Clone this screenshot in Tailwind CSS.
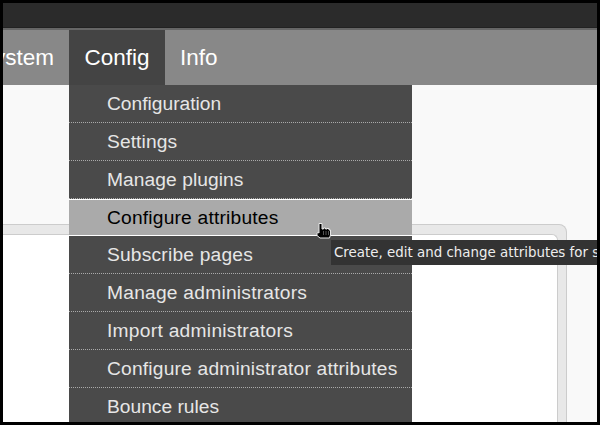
<!DOCTYPE html>
<html lang="en">
<head>
    <meta charset="UTF-8">
    <title>Config menu</title>
    <script src="https://cdn.jsdelivr.net/npm/@tailwindcss/browser@4"></script>
</head>
<body class="w-[600px] h-[425px] overflow-hidden bg-black font-['Liberation_Sans',sans-serif]">
    <div class="relative w-[600px] h-[425px] border-[3px] border-black overflow-hidden bg-[#f9f9f9]">

        <!-- Top bar -->
        <div class="h-[25px] bg-[#2b2b2b] border-b border-[#222]"></div>
        <div class="h-[2px] bg-[#666]"></div>

        <!-- Nav -->
        <nav class="h-[55px] flex bg-[#888] text-white text-[22.5px]">
            <div class="w-[66px] flex items-center justify-end pr-[15px] overflow-hidden whitespace-nowrap">System</div>
            <div class="w-[96px] flex items-center pl-[15.500px] bg-[#444]">Config</div>
            <div class="flex items-center pl-[15px]">Info</div>
        </nav>

        <!-- Page panel -->
        <div class="mt-[139px] w-[564px] h-[200px] bg-[#e8e8e8] border border-[#ccc] rounded-tr-[8px] border-l-0 pt-[9px] pr-[8px]">
            <div class="h-full bg-white border-t border-r border-[#ccc] rounded-tr-[6px]"></div>
        </div>

        <!-- Dropdown -->
        <ul class="absolute left-[66px] top-[82px] w-[343px] bg-[#4a4a4a] text-[#e6e6e6] text-[19.2px]">
            <li class="h-[38px] pl-[38px] pt-px flex items-center border-b border-dotted border-[#aaa]">Configuration</li>
            <li class="h-[38px] pl-[38px] pt-px flex items-center border-b border-dotted border-[#aaa] tracking-[0.1px]">Settings</li>
            <li class="h-[38px] pl-[38px] pt-px flex items-center border-b border-dotted border-[#aaa] tracking-[0.07px]">Manage plugins</li>
            <li class="h-[37px] pl-[38px] pt-px flex items-center bg-[#aaa] text-black border-t border-b border-t-white border-b-white border-b-dotted tracking-[0.2px]">Configure attributes</li>
            <li class="h-[38px] pl-[38px] pt-px flex items-center border-b border-dotted border-[#aaa] tracking-[0.2px]">Subscribe pages</li>
            <li class="h-[38px] pl-[38px] pt-px flex items-center border-b border-dotted border-[#aaa] tracking-[0.24px]">Manage administrators</li>
            <li class="h-[38px] pl-[38px] pt-px flex items-center border-b border-dotted border-[#aaa] tracking-[0.28px]">Import administrators</li>
            <li class="h-[38px] pl-[38px] pt-px flex items-center border-b border-dotted border-[#aaa] tracking-[0.2px]">Configure administrator attributes</li>
            <li class="h-[38px] pl-[38px] flex items-center">Bounce rules</li>
        </ul>

        <!-- Tooltip -->
        <div class="absolute left-[328px] top-[237px] w-[266px] h-[25px] pl-[3px] bg-[#333] text-[#eee] text-[13.4px] leading-[26px] whitespace-nowrap overflow-hidden font-['DejaVu_Sans',sans-serif]">Create, edit and change attributes for subscribers</div>

        <!-- Hand cursor -->
        <svg class="absolute left-[313px] top-[219px]" width="17" height="18" viewBox="0 0 17 18">
            <path d="M3 1.500h3v5.500h1.500V6h2v1h1.500V6.500h2V8h1.500v5l-1 3H4l-3-2.500V11l1-.5L3 11z" fill="#000" stroke="#e8e8e8" stroke-width="1" stroke-linejoin="round"/>
            <path d="M7.500 9v4M10 9v4M12.500 9v4" stroke="#777" stroke-width="0.7" fill="none"/>
        </svg>
    </div>
</body>
</html>
